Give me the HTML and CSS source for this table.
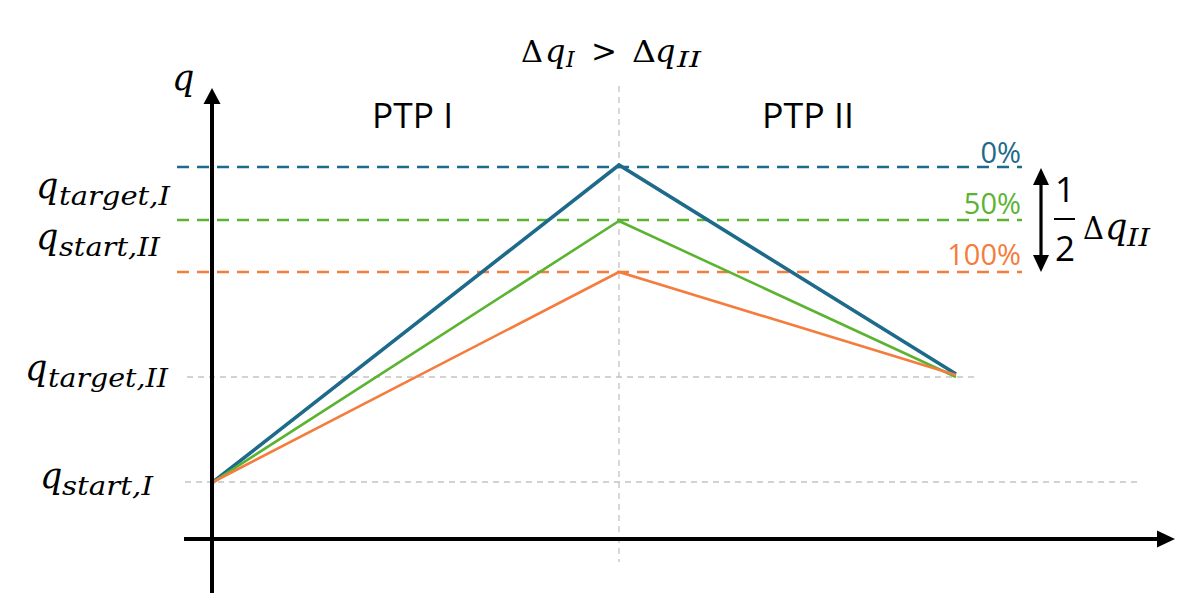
FILE: index.html
```html
<!DOCTYPE html>
<html lang="en">
<head>
<meta charset="utf-8">
<title>PTP diagram</title>
<link rel="stylesheet" href="styles.css">
</head>
<body>
<div class="figure">
<svg class="chart" width="1193" height="602" viewBox="0 0 1193 602" xmlns="http://www.w3.org/2000/svg">
  <!-- grey guide lines -->
  <line class="guide" x1="619" y1="86" x2="619" y2="562"/>
  <line class="guide" x1="187" y1="377" x2="978" y2="377"/>
  <line class="guide" x1="185" y1="482" x2="1140" y2="482"/>

  <!-- level lines -->
  <line class="level blue-s" x1="177" y1="167" x2="1022" y2="167"/>
  <line class="level green-s" x1="177" y1="220" x2="1022" y2="220"/>
  <line class="level orange-s" x1="177" y1="272" x2="1022" y2="272"/>

  <!-- trajectories -->
  <polyline class="traj blue-s thick" points="213,482 619,165 956,374"/>
  <polyline class="traj green-s" points="213,482 619,221 956,377"/>
  <polyline class="traj orange-s" points="213,482 619,272 956,375"/>

  <!-- axes -->
  <line class="axis" x1="212" y1="100" x2="212" y2="593"/>
  <polygon class="head" points="212,88 203.5,104 220.5,104"/>
  <line class="axis" x1="184" y1="539" x2="1160" y2="539"/>
  <polygon class="head" points="1175,539 1157,530.5 1157,547.5"/>

  <!-- double arrow -->
  <line class="darrow" x1="1041" y1="180" x2="1041" y2="260"/>
  <polygon class="head" points="1041,168 1033,185 1049,185"/>
  <polygon class="head" points="1041,272 1033,255 1049,255"/>

  <!-- axis label -->
  <text class="math" x="172" y="90" font-size="35">q</text>

  <!-- left labels -->
  <text class="math" x="36" y="198" font-size="35">q</text>
  <text class="math" x="59" y="205" font-size="26" textLength="111" lengthAdjust="spacingAndGlyphs">target,I</text>

  <text class="math" x="36" y="249" font-size="35">q</text>
  <text class="math" x="59" y="256" font-size="26" textLength="101" lengthAdjust="spacingAndGlyphs">start,II</text>

  <text class="math" x="25" y="380" font-size="35">q</text>
  <text class="math" x="48" y="387" font-size="26" textLength="120" lengthAdjust="spacingAndGlyphs">target,II</text>

  <text class="math" x="40" y="488" font-size="35">q</text>
  <text class="math" x="62" y="495" font-size="26" textLength="91" lengthAdjust="spacingAndGlyphs">start,I</text>

  <!-- title -->
  <text class="mathup" x="521" y="62" font-size="30" textLength="22" lengthAdjust="spacingAndGlyphs">Δ</text>
  <text class="math" x="545" y="62" font-size="32">q</text>
  <text class="math" x="566" y="67" font-size="22">I</text>
  <text class="mathup" x="591" y="62" font-size="32" textLength="26" lengthAdjust="spacingAndGlyphs">&gt;</text>
  <text class="mathup" x="632" y="62" font-size="30" textLength="24" lengthAdjust="spacingAndGlyphs">Δ</text>
  <text class="math" x="655" y="62" font-size="32">q</text>
  <text class="math" x="677" y="67" font-size="22" textLength="24" lengthAdjust="spacingAndGlyphs">II</text>

  <!-- phase labels -->
  <text class="sans" x="372" y="128" font-size="34" textLength="81" lengthAdjust="spacingAndGlyphs">PTP I</text>
  <text class="sans" x="762" y="128" font-size="34" textLength="92" lengthAdjust="spacingAndGlyphs">PTP II</text>

  <!-- percent labels -->
  <text class="sans blue-f" x="1021" y="163" font-size="29" text-anchor="end">0%</text>
  <text class="sans green-f" x="1021" y="214" font-size="29" text-anchor="end">50%</text>
  <text class="sans orange-f" x="1021" y="265" font-size="29" text-anchor="end">100%</text>

  <!-- one half delta q II -->
  <text class="sans" x="1065" y="202" font-size="35" text-anchor="middle">1</text>
  <line class="fracbar" x1="1054" y1="219" x2="1075" y2="219"/>
  <text class="sans" x="1065" y="261" font-size="35" text-anchor="middle">2</text>
  <text class="mathup" x="1083" y="239" font-size="32" textLength="21" lengthAdjust="spacingAndGlyphs">Δ</text>
  <text class="math" x="1105" y="239" font-size="35">q</text>
  <text class="math" x="1127" y="246" font-size="25" textLength="23" lengthAdjust="spacingAndGlyphs">II</text>
</svg>
</div>
</body>
</html>
```

FILE: styles.css
```css
html, body {
  margin: 0;
  padding: 0;
  background: #ffffff;
}

.figure {
  width: 1193px;
  height: 602px;
  overflow: hidden;
}

.chart {
  display: block;
}

.guide {
  stroke: #c4c4c4;
  stroke-width: 1.3;
  stroke-dasharray: 6 5;
  fill: none;
}

.level {
  stroke-width: 2.6;
  stroke-dasharray: 12 8;
  fill: none;
}

.traj {
  fill: none;
  stroke-width: 2.6;
  stroke-linejoin: miter;
}

.traj.thick {
  stroke-width: 3.6;
}

.blue-s { stroke: #1d6a8b; }
.green-s { stroke: #5bb431; }
.orange-s { stroke: #f47c3c; }

.axis {
  stroke: #000000;
  stroke-width: 4;
}

.darrow {
  stroke: #000000;
  stroke-width: 3.2;
}

.fracbar {
  stroke: #000000;
  stroke-width: 2;
}

.head {
  fill: #000000;
}

.math {
  font-family: "DejaVu Serif", "Liberation Serif", serif;
  font-style: italic;
  fill: #000000;
}

.mathup {
  font-family: "DejaVu Serif", "Liberation Serif", serif;
  font-style: normal;
  fill: #000000;
}

.sans {
  font-family: "Open Sans", "Noto Sans", "Liberation Sans", sans-serif;
  fill: #000000;
}

.sans.blue-f { fill: #1d6a8b; }
.sans.green-f { fill: #5bb431; }
.sans.orange-f { fill: #f47c3c; }
```
